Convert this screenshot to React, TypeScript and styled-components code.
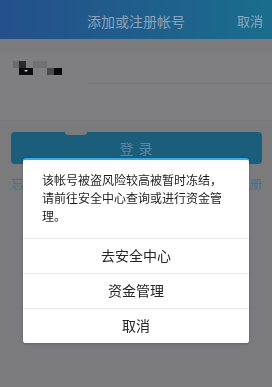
import styled, { createGlobalStyle } from 'styled-components';

const GlobalStyle = createGlobalStyle`
  html, body {
    margin: 0;
    padding: 0;
    background: #7b7b7e;
    font-family: "Noto Sans CJK SC", "Noto Sans", sans-serif;
  }
  * { box-sizing: border-box; }
`;

const Page = styled.div`
  width: 272px;
  height: 387px;
  overflow: hidden;
  background: #7b7b7e;
`;

const Header = styled.header`
  height: 39px;
  display: grid;
  grid-template-columns: 1fr auto 1fr;
  align-items: center;
  background: linear-gradient(90deg, #25508b 0%, #1f5f8c 55%, #1a6e8c 100%);
`;

const Title = styled.h1`
  grid-column: 2;
  margin: 0;
  font-size: 14px;
  font-weight: 400;
  color: #8ea4ba;
  line-height: 20px;
  padding-top: 2px;
`;

const HeaderAction = styled.span`
  grid-column: 3;
  justify-self: end;
  padding-right: 9px;
  padding-top: 2px;
  font-size: 13px;
  color: #93a7bb;
`;

const Fields = styled.section`
  margin-top: 13px;
  background: #7f7f82;
`;

const FieldRow = styled.div<{ $h: number }>`
  height: ${(p) => p.$h}px;
  display: flex;
  align-items: center;
  padding-left: 13px;
`;

const Divider = styled.div<{ $indent: number }>`
  height: 1px;
  margin-left: ${(p) => p.$indent}px;
  background: #77777a;
`;

const LoginButton = styled.div`
  position: relative;
  margin: 11px 10px 0 11px;
  height: 32px;
  border-radius: 4px;
  background: #1b5e7b;
  color: #5a89a3;
  font-size: 14px;
  display: flex;
  align-items: center;
  justify-content: center;
  letter-spacing: 1px;
`;

const Notch = styled.span`
  position: absolute;
  top: 0;
  left: 54px;
  width: 22px;
  height: 3px;
  border-radius: 0 0 4px 4px;
  background: #7b7b7e;
`;

const Links = styled.div`
  display: flex;
  justify-content: space-between;
  padding: 0 10px 0 11px;
  margin-top: 12px;
  font-size: 12px;
  line-height: 16px;
  color: #3d7190;
`;

const Backdrop = styled.div`
  position: fixed;
  inset: 0;
  display: flex;
  justify-content: center;
  align-items: flex-start;
  padding-top: 158px;
`;

const Dialog = styled.div`
  width: 226px;
  background: #fff;
  border-top: 2px solid #36ace6;
  border-radius: 3px;
  overflow: hidden;
  box-shadow: 0 1px 3px rgba(0, 0, 0, 0.2);
`;

const Message = styled.p`
  margin: 0;
  padding: 11px 19px 13px 19px;
  font-size: 12px;
  line-height: 18px;
  color: #1e1e1e;
`;

const Action = styled.button`
  display: block;
  width: 100%;
  height: 35px;
  border: 0;
  border-top: 1px solid #ececec;
  background: #fff;
  font-family: inherit;
  font-size: 14px;
  color: #262626;
  padding: 0;
  padding-bottom: 2px;
`;

function Mosaic() {
  return (
    <svg width="50" height="14" viewBox="0 0 50 14">
      <rect x="0" y="0" width="6" height="7" fill="#6b6b6c" />
      <rect x="6" y="0" width="7" height="7" fill="#2a2a2a" />
      <rect x="6" y="7" width="14" height="7" fill="#0c0c0c" />
      <path d="M11 9 L15 9 L13 11 Z" fill="#cfcfcf" />
      <rect x="20" y="0" width="14" height="7" fill="#707072" />
      <rect x="34" y="7" width="7" height="7" fill="#4a4a4b" />
      <rect x="41" y="7" width="8" height="7" fill="#080808" />
    </svg>
  );
}

export default function App() {
  return (
    <Page>
      <GlobalStyle />
      <Header>
        <Title>添加或注册帐号</Title>
        <HeaderAction>取消</HeaderAction>
      </Header>
      <Fields>
        <FieldRow $h={31}>
          <Mosaic />
        </FieldRow>
        <Divider $indent={88} />
        <FieldRow $h={36} />
        <Divider $indent={0} />
      </Fields>
      <LoginButton>
        <Notch />
        登 录
      </LoginButton>
      <Links>
        <span>忘记密码？</span>
        <span>新用户注册</span>
      </Links>
      <Backdrop>
        <Dialog>
          <Message>该帐号被盗风险较高被暂时冻结，请前往安全中心查询或进行资金管理。</Message>
          <Action>去安全中心</Action>
          <Action>资金管理</Action>
          <Action>取消</Action>
        </Dialog>
      </Backdrop>
    </Page>
  );
}
